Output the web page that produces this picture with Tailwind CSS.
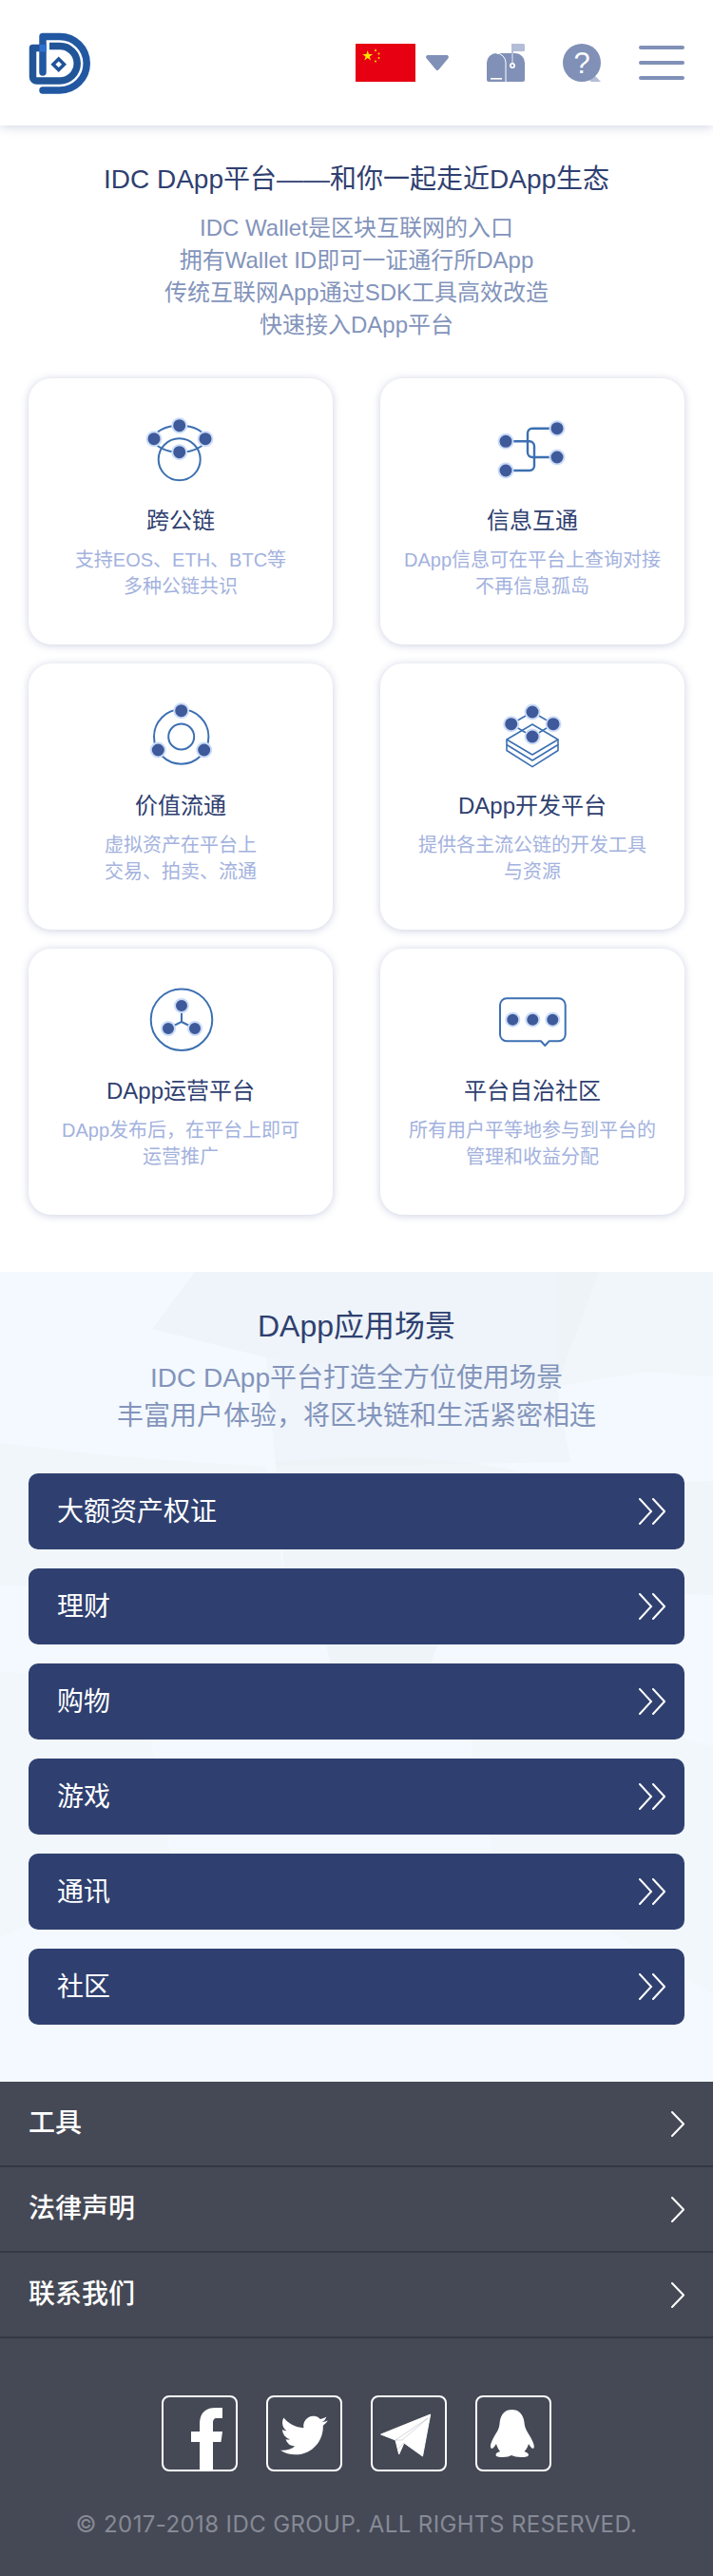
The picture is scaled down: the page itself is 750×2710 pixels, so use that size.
<!DOCTYPE html>
<html lang="zh-CN">
<head>
  <meta charset="UTF-8" />
  <title>IDC DApp平台</title>
  <script src="https://cdn.jsdelivr.net/npm/@tailwindcss/browser@4"></script>
</head>
<body class="bg-white font-['Liberation_Sans','Noto_Sans_CJK_SC',sans-serif] w-[750px]">

  <!-- header -->
  <header class="relative z-10 h-[132px] bg-white shadow-[0_2px_10px_rgba(70,80,130,0.22)] flex items-center pl-[30px] pr-[30px]">
    <svg class="w-[65px] h-[65px]" viewBox="30 33 65 65" fill="none">
      <path d="M45 75V37.5H63A28.2 28.2 0 0 1 63 93.9H45" stroke="#2258a2" stroke-width="7.5" stroke-linecap="round" stroke-linejoin="round" />
      <path d="M45 49.5H34.5V80a4 4 0 0 0 4 4H63A18.2 18.2 0 0 0 63 47.6H52" stroke="#215598" stroke-width="7.5" stroke-linejoin="round" />
      <rect x="41.5" y="46" width="7.5" height="7.5" fill="#2f70cf" />
      <path d="M61.7 58.5L70 66.7L61.7 75L53.4 66.7Z" fill="#1f5399" />
      <path d="M61.7 63.5L65 66.7L61.7 70L58.4 66.7Z" fill="#fff" />
    </svg>
    <div class="ml-auto flex items-center">
      <svg class="w-[63px] h-[40px]" viewBox="0 0 63 40">
        <rect width="63" height="40" fill="#e60012" />
        <path d="M12.7 7l1.3 4h4.2l-3.4 2.5 1.3 4-3.4-2.5-3.4 2.5 1.3-4L7.2 11h4.2z" fill="#ffe400" />
        <circle cx="21" cy="7" r="1" fill="#ffe400" />
        <circle cx="24.5" cy="10.5" r="1" fill="#ffe400" />
        <circle cx="24.5" cy="15" r="1" fill="#ffe400" />
        <circle cx="21" cy="18.5" r="1" fill="#ffe400" />
      </svg>
      <svg class="w-[24px] h-[16px] ml-[11px]" viewBox="0 0 24 16">
        <path d="M2 0H22a2 2 0 0 1 1.5 3.2L13.5 15.2a2 2 0 0 1-3 0L.5 3.2A2 2 0 0 1 2 0Z" fill="#8090b7" />
      </svg>
      <svg class="w-[40px] h-[40px] ml-[40px]" viewBox="0 0 40 40">
        <path d="M0 20A10 10 0 0 1 10 10H30A10 10 0 0 1 40 20V38a2 2 0 0 1-2 2H2a2 2 0 0 1-2-2Z" fill="#8090b7" />
        <path d="M10 10A10 10 0 0 1 20 20V40" fill="none" stroke="#fff" stroke-width="1" />
        <rect x="4" y="36" width="12" height="1.6" fill="#fff" />
        <rect x="26" y="0" width="14" height="8" rx="1.5" fill="#b3bdd6" />
        <rect x="26" y="0" width="2" height="22" fill="#b3bdd6" />
        <circle cx="27" cy="23" r="3" fill="#fff" />
        <circle cx="27" cy="23" r="1.2" fill="#8090b7" />
      </svg>
      <svg class="w-[40px] h-[40px] ml-[40px]" viewBox="0 0 40 40">
        <path d="M26 37L34.7 34.5L40 40H30Z" fill="#b3bdd6" />
        <circle cx="20" cy="20" r="20" fill="#8090b7" />
        <text x="20" y="31" text-anchor="middle" font-size="31" fill="#fff" font-family="Liberation Sans">?</text>
      </svg>
      <div class="ml-[40px] w-[48px] flex flex-col gap-[12px]">
        <div class="h-[4px] rounded-full bg-[#8090b7]"></div>
        <div class="h-[4px] rounded-full bg-[#8090b7]"></div>
        <div class="h-[4px] rounded-full bg-[#8090b7]"></div>
      </div>
    </div>
  </header>

  <!-- intro + cards -->
  <section class="pt-[37px] pb-[60px] px-[30px]">
    <h1 class="text-[28px] leading-[40px] font-normal text-center text-[#2f4070]">IDC DApp平台——和你一起走近DApp生态</h1>
    <p class="mt-[14px] text-[24px] leading-[34px] text-center text-[#8394bb]">IDC Wallet是区块互联网的入口<br />拥有Wallet ID即可一证通行所DApp<br />传统互联网App通过SDK工具高效改造<br />快速接入DApp平台</p>

    <div class="mt-[39px] grid grid-cols-[320px_320px] gap-x-[50px] gap-y-[20px]">

      <div class="h-[280px] rounded-[24px] bg-white shadow-[0_1px_8px_rgba(90,100,160,0.3)] pt-[35px] flex flex-col items-center">
        <svg class="w-[100px] h-[80px]" viewBox="0 0 100 80" fill="none" stroke-width="2">
          <circle cx="48.7" cy="50.3" r="22" stroke="#3c70b2" />
          <ellipse cx="49" cy="28.7" rx="27" ry="14" stroke="#3c70b2" />
          <g fill="#3f5a9a" stroke="#cbdcf8">
            <circle cx="48.7" cy="14.7" r="7.5" />
            <circle cx="22" cy="28.7" r="7.5" />
            <circle cx="76" cy="28.7" r="7.5" />
            <circle cx="48.7" cy="42.7" r="7.5" />
          </g>
        </svg>
        <h3 class="mt-[18px] text-[24px] leading-[34px] font-normal text-[#2f4070]">跨公链</h3>
        <p class="mt-[10px] text-[20px] leading-[28px] text-center text-[#a3b2de]">支持EOS、ETH、BTC等<br />多种公链共识</p>
      </div>

      <div class="h-[280px] rounded-[24px] bg-white shadow-[0_1px_8px_rgba(90,100,160,0.3)] pt-[35px] flex flex-col items-center">
        <svg class="w-[100px] h-[80px]" viewBox="0 0 100 80" fill="none" stroke-width="2.4">
          <path d="M76 17.7H50a5 5 0 0 0-5 5V43a5 5 0 0 0 5 5H76" stroke="#3c70b2" />
          <path d="M22 31.3H47a5 5 0 0 1 5 5V57a5 5 0 0 1-5 5H22" stroke="#3c70b2" />
          <g fill="#3f5a9a" stroke="#cbdcf8" stroke-width="2">
            <circle cx="22" cy="31.3" r="7.5" />
            <circle cx="22" cy="62" r="7.5" />
            <circle cx="76" cy="17.7" r="7.5" />
            <circle cx="76" cy="48" r="7.5" />
          </g>
        </svg>
        <h3 class="mt-[18px] text-[24px] leading-[34px] font-normal text-[#2f4070]">信息互通</h3>
        <p class="mt-[10px] text-[20px] leading-[28px] text-center text-[#a3b2de]">DApp信息可在平台上查询对接<br />不再信息孤岛</p>
      </div>

      <div class="h-[280px] rounded-[24px] bg-white shadow-[0_1px_8px_rgba(90,100,160,0.3)] pt-[35px] flex flex-col items-center">
        <svg class="w-[100px] h-[80px]" viewBox="0 0 100 80" fill="none" stroke-width="2">
          <circle cx="50.7" cy="42" r="28.7" stroke="#3c70b2" />
          <circle cx="50.7" cy="42" r="13.5" stroke="#3c70b2" />
          <g fill="#3f5a9a" stroke="#cbdcf8">
            <circle cx="50.7" cy="14.7" r="7.5" />
            <circle cx="26.3" cy="56" r="7.5" />
            <circle cx="74.7" cy="56" r="7.5" />
          </g>
        </svg>
        <h3 class="mt-[18px] text-[24px] leading-[34px] font-normal text-[#2f4070]">价值流通</h3>
        <p class="mt-[10px] text-[20px] leading-[28px] text-center text-[#a3b2de]">虚拟资产在平台上<br />交易、拍卖、流通</p>
      </div>

      <div class="h-[280px] rounded-[24px] bg-white shadow-[0_1px_8px_rgba(90,100,160,0.3)] pt-[35px] flex flex-col items-center">
        <svg class="w-[100px] h-[80px]" viewBox="0 0 100 80" fill="none" stroke-width="1.6">
          <path d="M50 29L77 45L50 61L23 45Z" stroke="#3c70b2" stroke-linejoin="round" />
          <path d="M23 45V50.5L50 67L77 50.5V45" stroke="#3c70b2" stroke-linejoin="round" />
          <path d="M23 50.5V56.5L50 73.7L77 56.5V50.5" stroke="#3c70b2" stroke-linejoin="round" />
          <path d="M50 16L27.7 28.7L50 42L72 28.7Z" stroke="#3c70b2" />
          <g fill="#3f5a9a" stroke="#cbdcf8" stroke-width="2">
            <circle cx="50" cy="16" r="7.5" />
            <circle cx="27.7" cy="28.7" r="7.5" />
            <circle cx="72" cy="28.7" r="7.5" />
            <circle cx="50" cy="42" r="7.5" />
          </g>
        </svg>
        <h3 class="mt-[18px] text-[24px] leading-[34px] font-normal text-[#2f4070]">DApp开发平台</h3>
        <p class="mt-[10px] text-[20px] leading-[28px] text-center text-[#a3b2de]">提供各主流公链的开发工具<br />与资源</p>
      </div>

      <div class="h-[280px] rounded-[24px] bg-white shadow-[0_1px_8px_rgba(90,100,160,0.3)] pt-[35px] flex flex-col items-center">
        <svg class="w-[100px] h-[80px]" viewBox="0 0 100 80" fill="none" stroke-width="2">
          <circle cx="51" cy="39.7" r="32.3" stroke="#3c70b2" />
          <path d="M51 25V42L37 49M51 42L65 49" stroke="#3c70b2" />
          <g fill="#3f5a9a" stroke="#cbdcf8">
            <circle cx="51" cy="25" r="7" />
            <circle cx="37" cy="49" r="7" />
            <circle cx="65" cy="49" r="7" />
          </g>
        </svg>
        <h3 class="mt-[18px] text-[24px] leading-[34px] font-normal text-[#2f4070]">DApp运营平台</h3>
        <p class="mt-[10px] text-[20px] leading-[28px] text-center text-[#a3b2de]">DApp发布后，在平台上即可<br />运营推广</p>
      </div>

      <div class="h-[280px] rounded-[24px] bg-white shadow-[0_1px_8px_rgba(90,100,160,0.3)] pt-[35px] flex flex-col items-center">
        <svg class="w-[100px] h-[80px]" viewBox="0 0 100 80" fill="none" stroke-width="2">
          <path d="M23 17.3H77.7a7 7 0 0 1 7 7V55.3a7 7 0 0 1-7 7H67.5L63.3 67L59 62.3H23a7 7 0 0 1-7-7V24.3a7 7 0 0 1 7-7Z" stroke="#3c70b2" stroke-linejoin="round" />
          <g fill="#3f5a9a" stroke="#cbdcf8">
            <circle cx="29.3" cy="39.7" r="7" />
            <circle cx="50.3" cy="39.7" r="7" />
            <circle cx="71.3" cy="39.7" r="7" />
          </g>
        </svg>
        <h3 class="mt-[18px] text-[24px] leading-[34px] font-normal text-[#2f4070]">平台自治社区</h3>
        <p class="mt-[10px] text-[20px] leading-[28px] text-center text-[#a3b2de]">所有用户平等地参与到平台的<br />管理和收益分配</p>
      </div>
    </div>
  </section>

  <!-- scenes -->
  <section class="relative bg-[#f3f9fe] pt-[35px] pb-[60px] px-[30px] overflow-hidden">
    <svg class="absolute left-0 top-0 w-[750px] h-[852px]" viewBox="0 0 750 852">
      <path d="M205 0H630L585 120L280 90L160 60Z" fill="#e9edf3" fill-opacity="0.45" />
      <path d="M280 90L585 120L600 200L290 205Z" fill="#ebeff5" fill-opacity="0.35" />
      <path d="M585 0H750V110L680 105L585 120Z" fill="#eef2f7" fill-opacity="0.45" />
      <path d="M0 180L130 195L280 205L300 330L0 330Z" fill="#eef2f7" fill-opacity="0.45" />
      <path d="M290 200C400 190 520 195 600 225L750 220V340L300 330Z" fill="#ebeff5" fill-opacity="0.4" />
      <path d="M330 340H480L450 420H350Z" fill="#e9edf3" fill-opacity="0.4" />
      <path d="M0 420L150 440L180 620L0 700Z" fill="#eef2f7" fill-opacity="0.25" />
      <path d="M480 420L750 500V760L520 620Z" fill="#eef2f7" fill-opacity="0.2" />
    </svg>
    <div class="relative">
      <h2 class="text-[32px] leading-[44px] font-normal text-center text-[#2f4070]">DApp应用场景</h2>
      <p class="mt-[13px] text-[28px] leading-[40px] text-center text-[#8394bb]">IDC DApp平台打造全方位使用场景<br />丰富用户体验，将区块链和生活紧密相连</p>
      <div class="mt-[40px] flex flex-col gap-[20px]">
        <a class="h-[80px] rounded-[10px] bg-[#2f4070] flex items-center justify-between pl-[30px] pr-[20px] text-[28px] text-white"><span class="pt-[2px]">大额资产权证</span>
          <svg class="w-[28px] h-[28px]" viewBox="0 0 28 28" fill="none" stroke="#fff" stroke-width="2" stroke-linecap="round"><path d="M1 1L13 14L1 27M15 1L27 14L15 27" /></svg></a>
        <a class="h-[80px] rounded-[10px] bg-[#2f4070] flex items-center justify-between pl-[30px] pr-[20px] text-[28px] text-white"><span class="pt-[2px]">理财</span>
          <svg class="w-[28px] h-[28px]" viewBox="0 0 28 28" fill="none" stroke="#fff" stroke-width="2" stroke-linecap="round"><path d="M1 1L13 14L1 27M15 1L27 14L15 27" /></svg></a>
        <a class="h-[80px] rounded-[10px] bg-[#2f4070] flex items-center justify-between pl-[30px] pr-[20px] text-[28px] text-white"><span class="pt-[2px]">购物</span>
          <svg class="w-[28px] h-[28px]" viewBox="0 0 28 28" fill="none" stroke="#fff" stroke-width="2" stroke-linecap="round"><path d="M1 1L13 14L1 27M15 1L27 14L15 27" /></svg></a>
        <a class="h-[80px] rounded-[10px] bg-[#2f4070] flex items-center justify-between pl-[30px] pr-[20px] text-[28px] text-white"><span class="pt-[2px]">游戏</span>
          <svg class="w-[28px] h-[28px]" viewBox="0 0 28 28" fill="none" stroke="#fff" stroke-width="2" stroke-linecap="round"><path d="M1 1L13 14L1 27M15 1L27 14L15 27" /></svg></a>
        <a class="h-[80px] rounded-[10px] bg-[#2f4070] flex items-center justify-between pl-[30px] pr-[20px] text-[28px] text-white"><span class="pt-[2px]">通讯</span>
          <svg class="w-[28px] h-[28px]" viewBox="0 0 28 28" fill="none" stroke="#fff" stroke-width="2" stroke-linecap="round"><path d="M1 1L13 14L1 27M15 1L27 14L15 27" /></svg></a>
        <a class="h-[80px] rounded-[10px] bg-[#2f4070] flex items-center justify-between pl-[30px] pr-[20px] text-[28px] text-white"><span class="pt-[2px]">社区</span>
          <svg class="w-[28px] h-[28px]" viewBox="0 0 28 28" fill="none" stroke="#fff" stroke-width="2" stroke-linecap="round"><path d="M1 1L13 14L1 27M15 1L27 14L15 27" /></svg></a>
      </div>
    </div>
  </section>

  <!-- footer -->
  <footer class="bg-[#454955] h-[520px]">
    <a class="h-[90px] border-b-2 border-[#343844] flex items-center justify-between px-[30px] text-[28px] font-medium text-white">工具
      <svg class="w-[14px] h-[27px]" viewBox="0 0 14 27" fill="none" stroke="#fff" stroke-width="2" stroke-linecap="round"><path d="M1 1L13 13.5L1 26" /></svg></a>
    <a class="h-[90px] border-b-2 border-[#343844] flex items-center justify-between px-[30px] text-[28px] font-medium text-white">法律声明
      <svg class="w-[14px] h-[27px]" viewBox="0 0 14 27" fill="none" stroke="#fff" stroke-width="2" stroke-linecap="round"><path d="M1 1L13 13.5L1 26" /></svg></a>
    <a class="h-[90px] border-b-2 border-[#343844] flex items-center justify-between px-[30px] text-[28px] font-medium text-white">联系我们
      <svg class="w-[14px] h-[27px]" viewBox="0 0 14 27" fill="none" stroke="#fff" stroke-width="2" stroke-linecap="round"><path d="M1 1L13 13.5L1 26" /></svg></a>

    <div class="mt-[60px] flex justify-center gap-[30px]">
      <a class="w-[80px] h-[80px] rounded-[8px] border-2 border-white overflow-hidden">
        <svg class="block -m-[2px] w-[80px] h-[80px]" viewBox="0 0 80 80"><path d="M40 80V49H31V38H40V30C40 18 47 13 56 13H64V24H58C55 24 54 26 54 29V38H64L62.5 49H54V80Z" fill="#fff" /></svg>
      </a>
      <a class="w-[80px] h-[80px] rounded-[8px] border-2 border-white overflow-hidden">
        <svg class="block -m-[2px] w-[80px] h-[80px]" viewBox="0 0 80 80"><path transform="translate(15 17) scale(2.08)" d="M23.953 4.57a10 10 0 01-2.825.775 4.958 4.958 0 002.163-2.723c-.951.555-2.005.959-3.127 1.184a4.92 4.92 0 00-8.384 4.482C7.69 8.095 4.067 6.13 1.64 3.162a4.822 4.822 0 00-.666 2.475c0 1.71.87 3.213 2.188 4.096a4.904 4.904 0 01-2.228-.616v.06a4.923 4.923 0 003.946 4.827 4.996 4.996 0 01-2.212.085 4.936 4.936 0 004.604 3.417 9.867 9.867 0 01-6.102 2.105c-.39 0-.779-.023-1.17-.067a13.995 13.995 0 007.557 2.209c9.053 0 13.998-7.496 13.998-13.985 0-.21 0-.42-.015-.63A9.935 9.935 0 0024 4.59z" fill="#fff" /></svg>
      </a>
      <a class="w-[80px] h-[80px] rounded-[8px] border-2 border-white overflow-hidden">
        <svg class="block -m-[2px] w-[80px] h-[80px]" viewBox="0 0 80 80">
          <path d="M62.7 20L10.6 41L26 47L29.7 62L35 50L54.5 64Z" fill="#fff" stroke="#fff" stroke-linejoin="round" />
          <path d="M60 24L26 47L33 47L60 24M35 50L29 56" fill="none" stroke="#9a9da6" stroke-width="0.4" />
        </svg>
      </a>
      <a class="w-[80px] h-[80px] rounded-[8px] border-2 border-white overflow-hidden">
        <svg class="block -m-[2px] w-[80px] h-[80px]" viewBox="0 0 80 80"><path d="M38.5 15C29.5 15 26 22 25.5 30C25.2 33 24.5 35 23 38C20 43 15.5 50 16 54C16.2 56 17.5 56.5 19 55C20 54 21 52.5 22 51C23 55 25 57.5 26 59C23 60 21.5 61 21.5 62.5C21.5 64.5 25 65 29 65C33 65 36 64 38 63C40.5 64 44 65 48 65C52.5 65 56 64.5 56 62.5C56 61 54 60 51.5 59C53 57.5 55 55 56 51C57 52.5 58 54 59 55C60.5 56.5 61.7 56 61.8 54C62 50 57.5 43 54.5 38C53 35 52 33 51.7 30C51 22 47.5 15 38.5 15Z" fill="#fff" /></svg>
      </a>
    </div>
    <p class="mt-[39px] text-center text-[24px] leading-[34px] tracking-[0.4px] font-['Inter',sans-serif] text-[#868a96]">© 2017-2018 IDC GROUP. ALL RIGHTS RESERVED.</p>
  </footer>
</body>
</html>
